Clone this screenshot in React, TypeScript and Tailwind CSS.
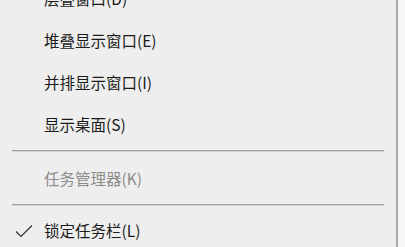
const items = [
  { label: '层叠窗口(D)' },
  { label: '堆叠显示窗口(E)' },
  { label: '并排显示窗口(I)' },
  { label: '显示桌面(S)' },
];

function Item({ label, disabled = false, checked = false }: { label: string; disabled?: boolean; checked?: boolean }) {
  return (
    <div className={`flex h-[42px] items-center ${disabled ? 'text-[#8c8c8c]' : 'text-[#1a1a1a]'}`}>
      <div className="flex w-[44px] shrink-0 justify-center pl-[4px]">
        {checked && (
          <svg width="18" height="14" viewBox="0 0 18 14" fill="none">
            <polyline points="1,7.5 6,12.5 17,1.5" stroke="#333" strokeWidth="1.2" />
          </svg>
        )}
      </div>
      <span className="text-[15.5px] leading-none">{label}</span>
    </div>
  );
}

function Separator() {
  return <div className="mx-[12px] my-[4px] h-[2px] border-t border-[#a0a0a0] bg-[#d4d4d4] w-[372px]" />;
}

export default function App() {
  return (
    <div
      className="flex h-[247px] w-[405px] overflow-hidden bg-[#f4f4f4]"
      style={{ fontFamily: '"Noto Sans CJK SC", "Microsoft YaHei", sans-serif' }}
    >
      <div className="w-[396px] shrink-0 bg-[#eeeeee]">
        <div className="-mt-[22px] flex flex-col">
          {items.map((it) => (
            <Item key={it.label} label={it.label} />
          ))}
          <Separator />
          <div className="pt-[2px]">
            <Item label="任务管理器(K)" disabled />
          </div>
          <Separator />
          <Item label="锁定任务栏(L)" checked />
        </div>
      </div>
      <div className="w-[2px] shrink-0 bg-[#a8a8a8]" />
      <div className="flex-1 bg-[#f6f6f6]" />
    </div>
  );
}
